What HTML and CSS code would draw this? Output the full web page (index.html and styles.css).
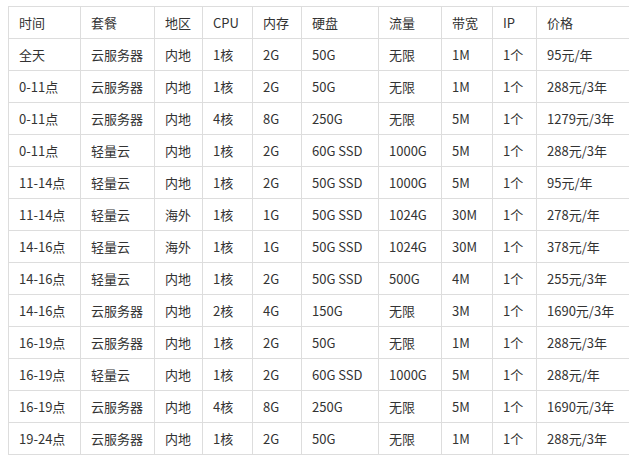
FILE: index.html
```html
<!DOCTYPE html>
<html lang="zh-CN">
<head>
<meta charset="utf-8">
<link rel="stylesheet" href="styles.css">
</head>
<body>
<div class="wrap">
<table class="plans">
<colgroup>
<col class="c1"><col class="c2"><col class="c3"><col class="c4"><col class="c5"><col class="c6"><col class="c7"><col class="c8"><col class="c9"><col class="c10">
</colgroup>
<thead>
<tr><td>时间</td><td>套餐</td><td>地区</td><td>CPU</td><td>内存</td><td>硬盘</td><td>流量</td><td>带宽</td><td>IP</td><td>价格</td></tr>
</thead>
<tbody>
<tr><td>全天</td><td>云服务器</td><td>内地</td><td>1核</td><td>2G</td><td>50G</td><td>无限</td><td>1M</td><td>1个</td><td>95元/年</td></tr>
<tr><td>0-11点</td><td>云服务器</td><td>内地</td><td>1核</td><td>2G</td><td>50G</td><td>无限</td><td>1M</td><td>1个</td><td>288元/3年</td></tr>
<tr><td>0-11点</td><td>云服务器</td><td>内地</td><td>4核</td><td>8G</td><td>250G</td><td>无限</td><td>5M</td><td>1个</td><td>1279元/3年</td></tr>
<tr><td>0-11点</td><td>轻量云</td><td>内地</td><td>1核</td><td>2G</td><td>60G SSD</td><td>1000G</td><td>5M</td><td>1个</td><td>288元/3年</td></tr>
<tr><td>11-14点</td><td>轻量云</td><td>内地</td><td>1核</td><td>2G</td><td>50G SSD</td><td>1000G</td><td>5M</td><td>1个</td><td>95元/年</td></tr>
<tr><td>11-14点</td><td>轻量云</td><td>海外</td><td>1核</td><td>1G</td><td>50G SSD</td><td>1024G</td><td>30M</td><td>1个</td><td>278元/年</td></tr>
<tr><td>14-16点</td><td>轻量云</td><td>海外</td><td>1核</td><td>1G</td><td>50G SSD</td><td>1024G</td><td>30M</td><td>1个</td><td>378元/年</td></tr>
<tr><td>14-16点</td><td>轻量云</td><td>内地</td><td>1核</td><td>2G</td><td>50G SSD</td><td>500G</td><td>4M</td><td>1个</td><td>255元/3年</td></tr>
<tr><td>14-16点</td><td>云服务器</td><td>内地</td><td>2核</td><td>4G</td><td>150G</td><td>无限</td><td>3M</td><td>1个</td><td>1690元/3年</td></tr>
<tr><td>16-19点</td><td>云服务器</td><td>内地</td><td>1核</td><td>2G</td><td>50G</td><td>无限</td><td>1M</td><td>1个</td><td>288元/3年</td></tr>
<tr><td>16-19点</td><td>轻量云</td><td>内地</td><td>1核</td><td>2G</td><td>60G SSD</td><td>1000G</td><td>5M</td><td>1个</td><td>288元/年</td></tr>
<tr><td>16-19点</td><td>云服务器</td><td>内地</td><td>4核</td><td>8G</td><td>250G</td><td>无限</td><td>5M</td><td>1个</td><td>1690元/3年</td></tr>
<tr><td>19-24点</td><td>云服务器</td><td>内地</td><td>1核</td><td>2G</td><td>50G</td><td>无限</td><td>1M</td><td>1个</td><td>288元/3年</td></tr>
</tbody>
</table>
</div>
</body>
</html>
```
FILE: styles.css
```css
html, body {
  margin: 0;
  padding: 0;
  overflow: hidden;
  background: #fff;
}
.wrap {
  box-sizing: border-box;
  width: 629px;
  height: 456px;
  padding: 6px 0 0 8px;
  overflow: hidden;
}
.plans {
  border-collapse: collapse;
  table-layout: fixed;
  width: 748px;
  font-family: "Noto Sans CJK SC", "Microsoft YaHei", sans-serif;
  font-size: 13px;
  color: #333;
}
.plans td {
  border: 1px solid #ddd;
  height: 31px;
  padding: 0 0 0 10px;
  line-height: 31px;
  white-space: nowrap;
  vertical-align: middle;
}
.c1 { width: 72px; }
.c2 { width: 74px; }
.c3 { width: 48px; }
.c4 { width: 50px; }
.c5 { width: 49px; }
.c6 { width: 77px; }
.c7 { width: 63px; }
.c8 { width: 51px; }
.c9 { width: 44px; }
.c10 { width: 220px; }
```
